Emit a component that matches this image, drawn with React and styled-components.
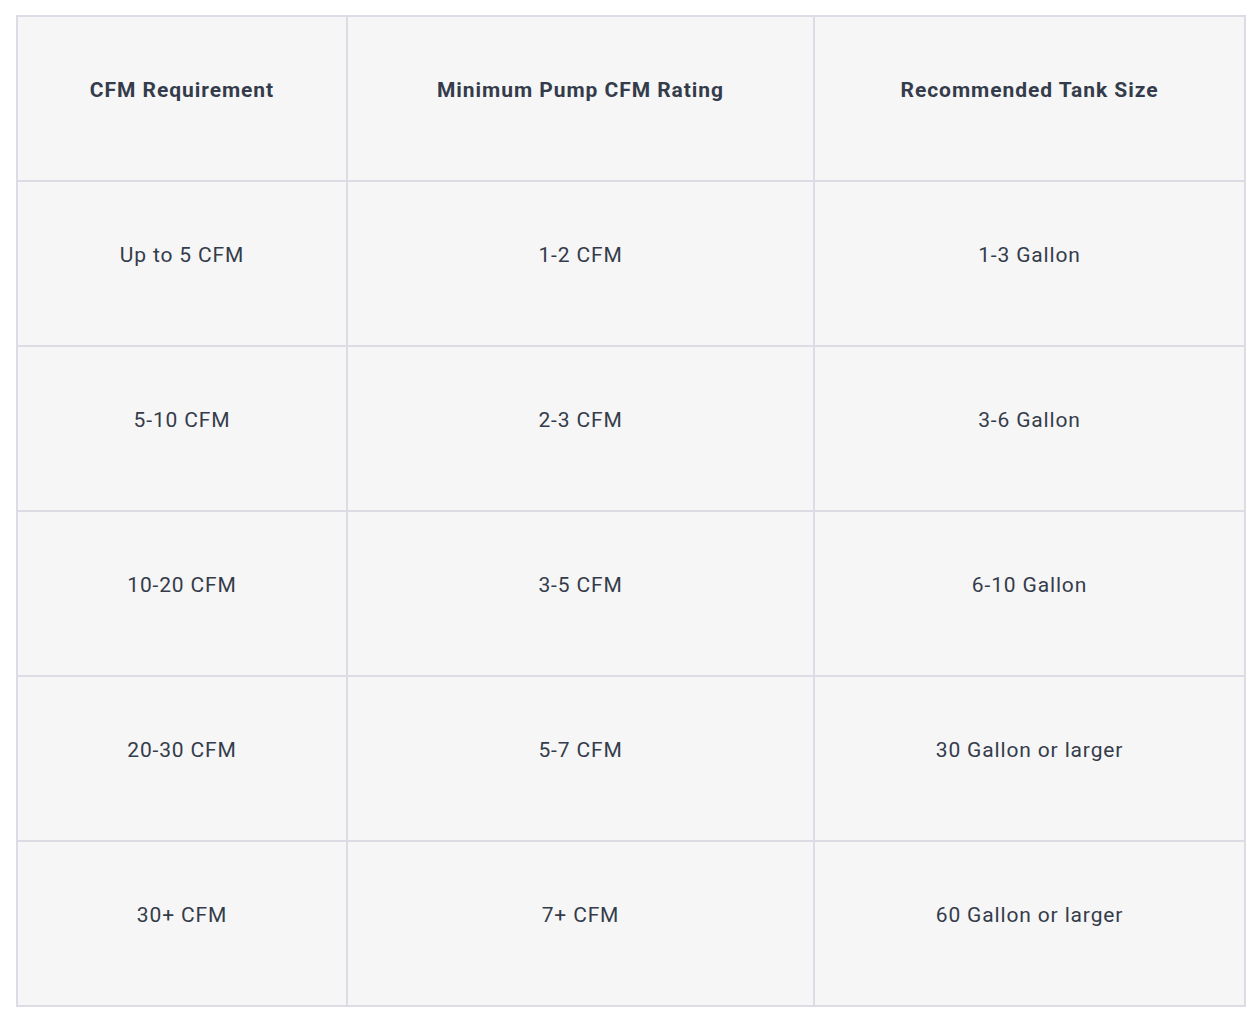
import React from "react";
import styled, { createGlobalStyle } from "styled-components";

const Global = createGlobalStyle`
  html, body { margin: 0; padding: 0; background: #ffffff; }
  body { font-family: Roboto, "Noto Sans", Arial, sans-serif; }
`;

const Page = styled.div`
  padding: 15px 16px 0 16px;
`;

const Table = styled.table`
  width: 1228px;
  border-collapse: collapse;
  table-layout: fixed;
  background: #f6f6f6;
  border: 2px solid #dcdce4;
`;

const HeadCell = styled.th`
  border: 2px solid #dcdce4;
  height: 165px;
  box-sizing: border-box;
  padding: 0 24px 18px;
  text-align: center;
  vertical-align: middle;
  font-size: 21px;
  font-weight: 700;
  letter-spacing: 0.95px;
  color: #343c4b;
  line-height: 30px;
`;

const Cell = styled.td`
  border: 2px solid #dcdce4;
  height: 165px;
  box-sizing: border-box;
  padding: 0 24px 18px;
  text-align: center;
  vertical-align: middle;
  font-size: 21px;
  font-weight: 400;
  letter-spacing: 0.85px;
  color: #343c4b;
  line-height: 30px;
`;

const rows = [
  ["Up to 5 CFM", "1-2 CFM", "1-3 Gallon"],
  ["5-10 CFM", "2-3 CFM", "3-6 Gallon"],
  ["10-20 CFM", "3-5 CFM", "6-10 Gallon"],
  ["20-30 CFM", "5-7 CFM", "30 Gallon or larger"],
  ["30+ CFM", "7+ CFM", "60 Gallon or larger"],
];

export default function App() {
  return (
    <Page>
      <Global />
      <Table>
        <colgroup>
          <col style={{ width: 330 }} />
          <col style={{ width: 467 }} />
          <col style={{ width: 431 }} />
        </colgroup>
        <thead>
          <tr>
            <HeadCell>CFM Requirement</HeadCell>
            <HeadCell>Minimum Pump CFM Rating</HeadCell>
            <HeadCell>Recommended Tank Size</HeadCell>
          </tr>
        </thead>
        <tbody>
          {rows.map((r, i) => (
            <tr key={i}>
              {r.map((c, j) => (
                <Cell key={j}>{c}</Cell>
              ))}
            </tr>
          ))}
        </tbody>
      </Table>
    </Page>
  );
}
